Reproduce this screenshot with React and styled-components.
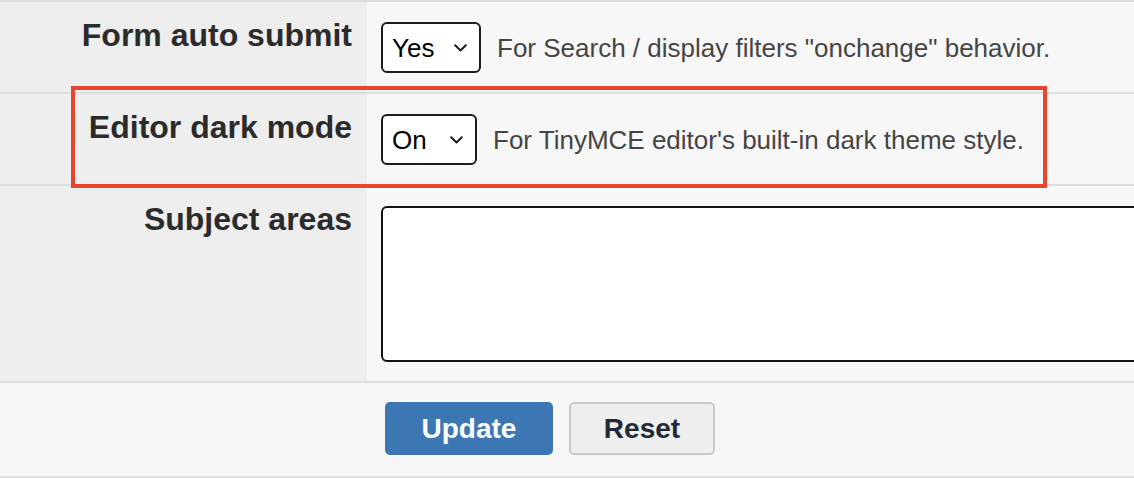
import React from "react";
import styled, { createGlobalStyle, css } from "styled-components";

const GlobalStyle = createGlobalStyle`
  html, body {
    margin: 0;
    padding: 0;
    background: #f7f7f7;
    overflow: hidden;
  }
  body {
    font-family: "Liberation Sans", Arial, Helvetica, sans-serif;
  }
`;

const Settings = styled.form`
  width: 1134px;
  border-top: 2px solid #dddddd;
`;

const Row = styled.div`
  position: relative;
  display: grid;
  grid-template-columns: 367px 1fr;
  border-bottom: 2px solid #dddddd;

  ${(p) =>
    p.$highlighted &&
    css`
      &::after {
        content: "";
        position: absolute;
        top: -8px;
        bottom: -4px;
        left: 71px;
        width: 976px;
        border: 4px solid #e8452c;
        box-sizing: border-box;
        pointer-events: none;
        z-index: 1;
      }
    `}
`;

const Label = styled.label`
  background: #eeeeee;
  padding: 15px 15px 0 0;
  text-align: right;
  font-size: 32px;
  font-weight: 700;
  color: #2b2b2b;
`;

const Field = styled.div`
  background: #f7f7f7;
  padding: 20px 0 19px 14px;
  display: flex;
  align-items: baseline;
  gap: 16px;
  min-width: 0;
  overflow: hidden;
`;

const SelectBox = styled.span`
  display: inline-flex;
  align-items: center;
  box-sizing: border-box;
  width: ${(p) => p.$width}px;
  height: 51px;
  padding: 0 12px 0 9px;
  border: 2px solid #1c1c1c;
  border-radius: 6px;
  background: #ffffff;

  svg {
    flex: none;
    pointer-events: none;
  }
`;

const NativeSelect = styled.select`
  appearance: none;
  flex: 1;
  min-width: 0;
  border: 0;
  padding: 0;
  margin: 0;
  background: transparent;
  font-family: inherit;
  font-size: 26px;
  color: #000000;
  outline: none;
`;

const Hint = styled.span`
  font-size: 26px;
  color: #454545;
  white-space: nowrap;
`;

const TextArea = styled.textarea`
  display: block;
  box-sizing: border-box;
  width: 820px;
  height: 156px;
  flex: none;
  border: 2px solid #111111;
  border-radius: 6px;
  background: #ffffff;
  resize: none;
  font-family: inherit;
  font-size: 26px;
`;

const Actions = styled.div`
  display: flex;
  gap: 16px;
  padding: 19px 0 21px 385px;
  border-bottom: 2px solid #dddddd;
  background: #f7f7f7;
`;

const Button = styled.button`
  box-sizing: border-box;
  width: ${(p) => p.$width}px;
  height: 53px;
  padding: 0;
  border-radius: 5px;
  font-family: inherit;
  font-size: 28px;
  font-weight: 700;
  cursor: pointer;
  border: 2px solid ${(p) => (p.$primary ? "#3d77b3" : "#c9c9c9")};
  background: ${(p) => (p.$primary ? "#3d77b3" : "#efefef")};
  color: ${(p) => (p.$primary ? "#ffffff" : "#222a38")};
`;

const Chevron = () => (
  <svg width="13" height="8" viewBox="0 0 13 8" aria-hidden="true">
    <path d="M1.2 1.2 L6.5 6.5 L11.8 1.2" fill="none" stroke="#1c1c1c" strokeWidth="2" strokeLinecap="round" strokeLinejoin="round" />
  </svg>
);

const Select = ({ width, options, value }) => (
  <SelectBox $width={width}>
    <NativeSelect defaultValue={value}>
      {options.map((o) => (
        <option key={o}>{o}</option>
      ))}
    </NativeSelect>
    <Chevron />
  </SelectBox>
);

const App = () => {
  return (
    <>
      <GlobalStyle />
      <Settings onSubmit={(e) => e.preventDefault()}>
        <Row>
          <Label>Form auto submit</Label>
          <Field>
            <Select width={100} options={["Yes", "No"]} value="Yes" />
            <Hint>For Search / display filters "onchange" behavior.</Hint>
          </Field>
        </Row>

        <Row $highlighted>
          <Label>Editor dark mode</Label>
          <Field>
            <Select width={96} options={["On", "Off"]} value="On" />
            <Hint>For TinyMCE editor's built-in dark theme style.</Hint>
          </Field>
        </Row>

        <Row>
          <Label>Subject areas</Label>
          <Field>
            <TextArea />
          </Field>
        </Row>

        <Actions>
          <Button $primary $width={168} type="submit">Update</Button>
          <Button $width={146} type="reset">Reset</Button>
        </Actions>
      </Settings>
    </>
  );
};

export default App;
